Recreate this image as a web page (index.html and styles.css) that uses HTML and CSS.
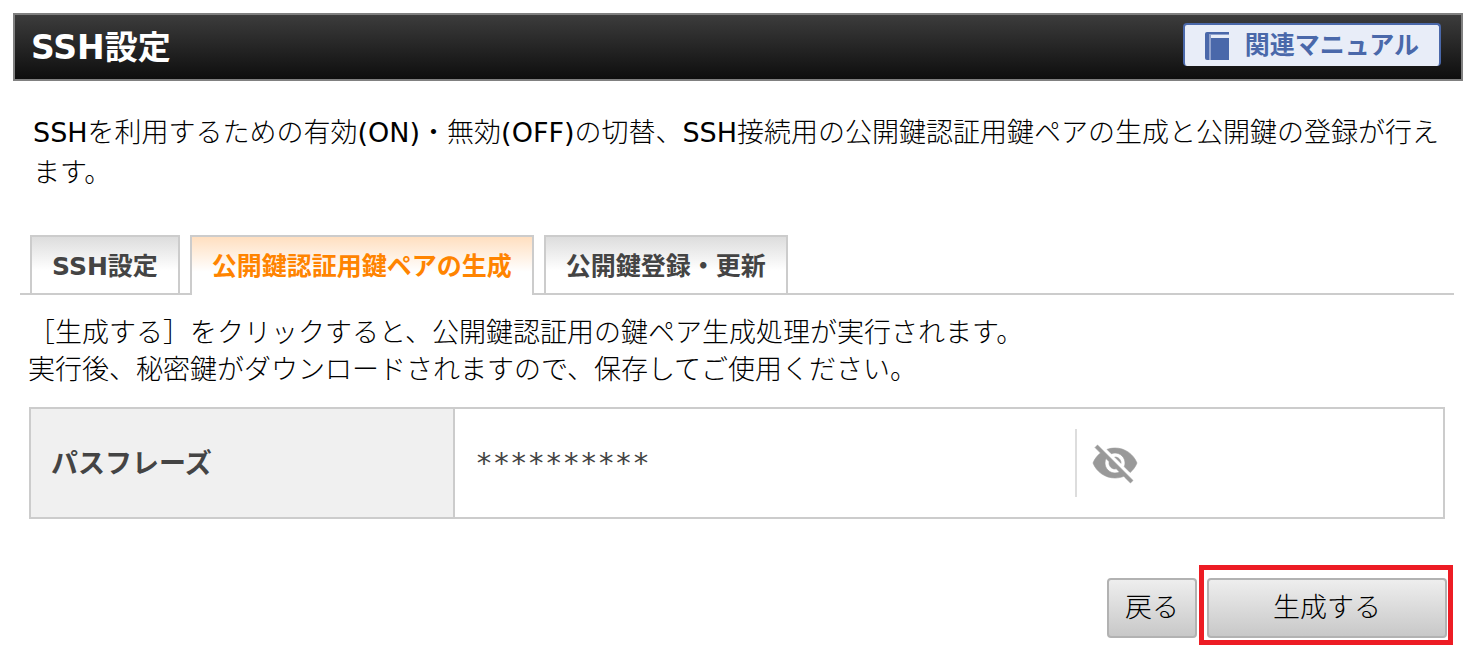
FILE: index.html
```html
<!DOCTYPE html>
<html lang="ja">
<head>
    <meta charset="UTF-8">
    <title>SSH設定</title>
    <link rel="stylesheet" href="styles.css">
</head>
<body>
    <header class="page-header">
        <h1>SSH設定</h1>
        <a href="manual.html" class="manual-link">
            <svg class="book-icon" viewBox="0 0 24 28" aria-hidden="true">
                <rect width="24" height="28" rx="2" fill="#4a68aa"/>
                <path d="M16 0H24V28H16Z" fill="#4a68aa"/>
                <path d="M4 2H24V3H4Z" fill="#8da0cd"/>
                <path d="M5 3H24V6H5Z" fill="#e8edf8"/>
                <path d="M4 3H6V28H4Z" fill="#92a3cd"/>
            </svg>
            関連マニュアル
        </a>
    </header>

    <main>
        <p class="lead">SSHを利用するための有効(ON)・無効(OFF)の切替、SSH接続用の公開鍵認証用鍵ペアの生成と公開鍵の登録が行えます。</p>

        <nav class="tabs">
            <a href="ssh.html" class="tab">SSH設定</a>
            <a href="keygen.html" class="tab active">公開鍵認証用鍵ペアの生成</a>
            <a href="register.html" class="tab">公開鍵登録・更新</a>
        </nav>

        <form class="key-form">
            <p class="description">［生成する］をクリックすると、公開鍵認証用の鍵ペア生成処理が実行されます。<br>実行後、秘密鍵がダウンロードされますので、保存してご使用ください。</p>

            <table class="form-table">
                <tr>
                    <th><label for="passphrase">パスフレーズ</label></th>
                    <td>
                        <div class="pass-field">
                            <input type="text" id="passphrase" value="**********">
                            <button type="button" class="toggle" aria-label="表示切替">
                                <svg viewBox="0 0 24 24" aria-hidden="true">
                                    <path fill="#999" stroke="#999" stroke-width=".3" d="M12 7c2.76 0 5 2.24 5 5 0 .65-.13 1.26-.36 1.83l2.92 2.92c1.51-1.26 2.7-2.89 3.43-4.75-1.73-4.39-6-7.5-11-7.5-1.4 0-2.74.25-3.98.7l2.16 2.16C10.74 7.13 11.35 7 12 7zM2 4.27l2.28 2.28.46.46C3.08 8.3 1.78 10.02 1 12c1.73 4.39 6 7.5 11 7.5 1.55 0 3.03-.3 4.38-.84l.42.42L19.73 22 21 20.73 3.27 3 2 4.27zM7.53 9.8l1.55 1.55c-.05.21-.08.43-.08.65 0 1.66 1.34 3 3 3 .22 0 .44-.03.65-.08l1.55 1.55c-.67.33-1.41.53-2.2.53-2.76 0-5-2.24-5-5 0-.79.2-1.53.53-2.2zm4.31-.78l3.15 3.15.02-.16c0-1.66-1.34-3-3-3l-.17.01z"/>
                                </svg>
                            </button>
                        </div>
                    </td>
                </tr>
            </table>

            <div class="actions">
                <button type="button" class="btn">戻る</button>
                <div class="highlight">
                    <button type="button" class="btn btn-wide">生成する</button>
                </div>
            </div>
        </form>
    </main>
</body>
</html>
```
FILE: styles.css
```css
:root {
    --line: #ccc;
    --text: #444;
    --blue: #4a68aa;
    --orange: #ff8400;
}

* {
    margin: 0;
    padding: 0;
    box-sizing: border-box;
}

body {
    padding: 13px 3px 0 13px;
    background-color: #fff;
    color: #000;
    font-family: "DejaVu Sans", "Noto Sans CJK JP Light", "Noto Sans CJK JP", sans-serif;
    font-size: 27px;
}

button,
input {
    font-family: inherit;
    font-size: inherit;
}

.page-header,
.tabs,
.form-table {
    font-family: "DejaVu Sans", "Noto Sans CJK JP", sans-serif;
}

.page-header {
    display: flex;
    justify-content: space-between;
    align-items: flex-start;
    height: 68px;
    padding: 8px 20px 0 16px;
    border: 2px solid #808080;
    background: linear-gradient(#3c3c3c, #0e0e0e);
    color: #fff;
}

.page-header h1 {
    font-size: 33px;
    line-height: 50px;
}

.manual-link {
    display: flex;
    align-items: center;
    gap: 16px;
    height: 43px;
    padding: 0 20px;
    border: 2px solid var(--blue);
    border-bottom: none;
    border-radius: 4px;
    background-color: #e8edf8;
    color: var(--blue);
    font-size: 25px;
    font-weight: bold;
    line-height: 42px;
    text-decoration: none;
}

.book-icon {
    width: 24px;
    height: 28px;
}

.lead {
    padding: 32px 10px 0 20px;
    line-height: 40px;
}

.tabs {
    display: flex;
    gap: 10px;
    margin: 42px 9px 0 7px;
    padding-left: 10px;
    border-bottom: 2px solid var(--line);
}

.tab {
    height: 58px;
    padding: 0 20px;
    border: 2px solid var(--line);
    border-bottom: none;
    background: linear-gradient(#ddd, #fff 60%);
    color: var(--text);
    font-size: 25px;
    font-weight: bold;
    line-height: 60px;
    text-decoration: none;
}

.tab.active {
    height: 60px;
    margin-bottom: -2px;
    background: linear-gradient(#ffdfc0, #fff 60%);
    color: var(--orange);
}

.key-form {
    padding: 19px 10px 0 15px;
}

.description {
    line-height: 37px;
}

.form-table {
    width: calc(100% - 9px);
    margin: 19px 0 0 1px;
    border-collapse: collapse;
    color: var(--text);
}

.form-table th,
.form-table td {
    height: 110px;
    border: 2px solid var(--line);
    padding: 0 20px;
    text-align: left;
}

.form-table th {
    width: 30%;
    padding-bottom: 4px;
    background-color: #f0f0f0;
}

.pass-field {
    display: flex;
    align-items: center;
    height: 68px;
}

.pass-field input {
    width: 600px;
    height: 68px;
    border: none;
    background: none;
    color: var(--text);
    font-family: "DejaVu Sans Mono", monospace;
    font-size: 29px;
}

.toggle {
    display: flex;
    align-items: center;
    height: 68px;
    padding-left: 14px;
    border: none;
    border-left: 2px solid #ddd;
    background: none;
    cursor: pointer;
}

.toggle svg {
    width: 48px;
    height: 48px;
}

.actions {
    display: flex;
    justify-content: flex-end;
    align-items: flex-start;
    gap: 2px;
    margin-top: 46px;
}

.btn {
    height: 60px;
    border: 2px solid #b2b2b2;
    border-radius: 4px;
    background: linear-gradient(#eee, #c8c8c8);
    color: #000;
    padding: 0 16px 6px;
    cursor: pointer;
}

.actions > .btn {
    margin-top: 13px;
}

.btn-wide {
    display: block;
    width: 240px;
}

.highlight {
    padding: 8px 1px 2px 3px;
    border: 5px solid #ed1c24;
}
```
